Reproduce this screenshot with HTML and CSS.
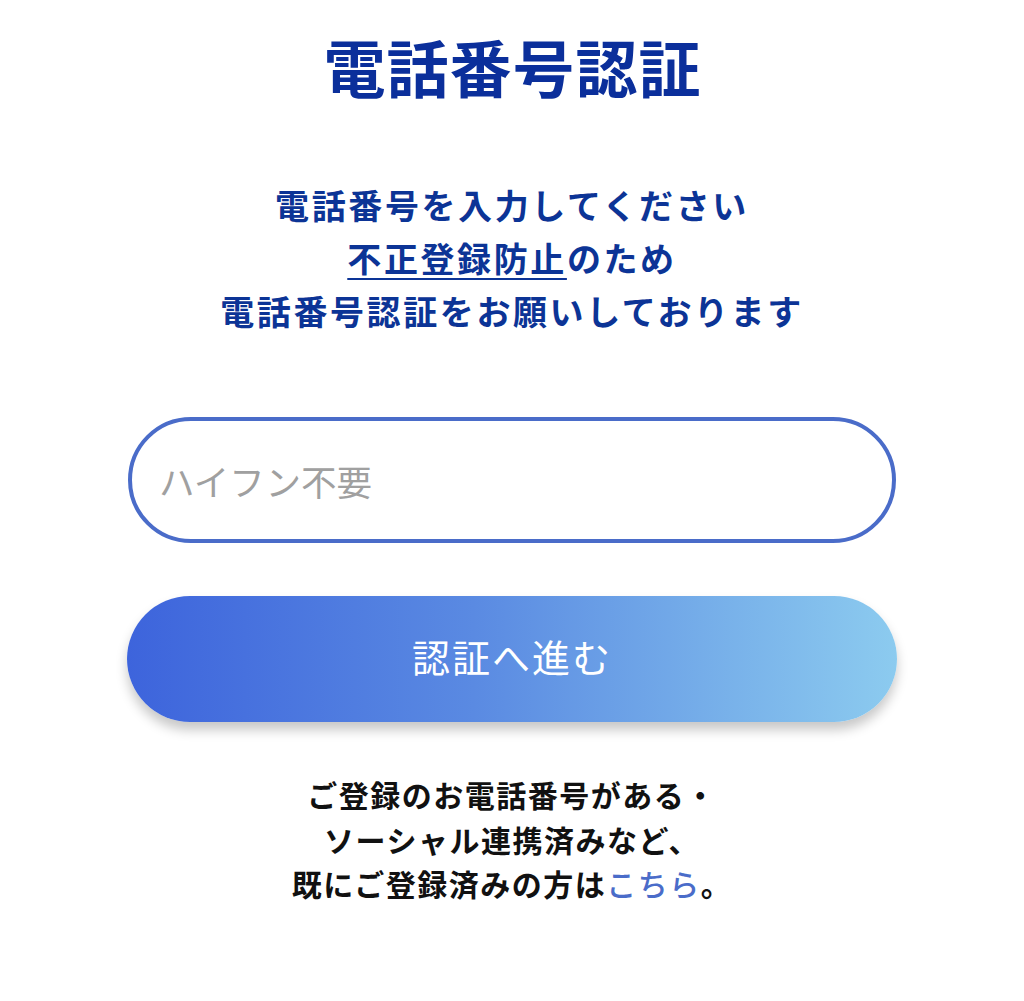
FILE: index.html
```html
<!DOCTYPE html>
<html lang="ja">
<head>
<meta charset="utf-8">
<title>電話番号認証</title>
<link rel="stylesheet" href="styles.css">
</head>
<body>
<main class="page">
  <h1 class="title">電話番号認証</h1>
  <p class="lead">電話番号を入力してください<br><span class="ul">不正登録防止</span>のため<br>電話番号認証をお願いしております</p>
  <input class="phone" type="tel" placeholder="ハイフン不要">
  <button class="submit" type="button">認証へ進む</button>
  <p class="note">ご登録のお電話番号がある・<br>ソーシャル連携済みなど、<br>既にご登録済みの方は<a class="link" href="#">こちら</a>。</p>
</main>
</body>
</html>
```
FILE: styles.css
```css
html, body {
  margin: 0;
  padding: 0;
  background: #ffffff;
}
body {
  font-family: "Noto Sans CJK JP", "Noto Sans", sans-serif;
}
.page {
  display: flex;
  flex-direction: column;
  align-items: center;
  padding-top: 30px;
}
.title {
  margin: 0;
  font-size: 62px;
  line-height: 72px;
  font-weight: 700;
  letter-spacing: 1px;
  margin-right: -1px;
  color: #0b2f9b;
}
.lead {
  margin: 76px 0 0;
  text-align: center;
  font-size: 34px;
  line-height: 53px;
  font-weight: 700;
  letter-spacing: 2.6px;
  color: #0c3496;
}
.ul {
  text-decoration: underline;
  text-decoration-thickness: 2px;
  text-underline-offset: 6px;
}
.phone {
  box-sizing: border-box;
  margin-top: 80px;
  width: 768px;
  height: 126px;
  border: 4px solid #4a6cc9;
  border-radius: 63px;
  padding: 0 27px;
  font-family: "Noto Sans CJK JP", "Noto Sans", sans-serif;
  font-size: 35.5px;
  color: #333;
  outline: none;
  background: #fff;
}
.phone::placeholder {
  color: #a0a0a0;
}
.submit {
  margin-top: 53px;
  width: 770px;
  height: 126px;
  border: none;
  border-radius: 63px;
  background: linear-gradient(to right, #3d64dc 0%, #5a8ae2 45%, #8ccbef 100%);
  box-shadow: 0 8px 12px rgba(0, 0, 0, 0.22);
  color: #ffffff;
  font-family: "Noto Sans CJK JP", "Noto Sans", sans-serif;
  font-size: 38px;
  line-height: 1;
  padding: 0 0 6px;
  letter-spacing: 2px;
  font-weight: 400;
}
.note {
  margin: 50px 0 0;
  text-align: center;
  font-size: 30px;
  line-height: 44.5px;
  font-weight: 700;
  letter-spacing: 1.5px;
  color: #111111;
}
.link {
  color: #4a6cc9;
  text-decoration: none;
  font-weight: 500;
}
```
